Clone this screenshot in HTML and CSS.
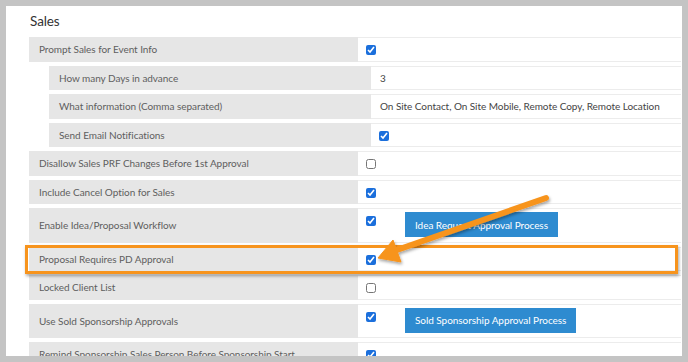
FILE: index.html
```html
<!DOCTYPE html>
<html lang="en">

<head>
  <meta charset="UTF-8">
  <meta name="viewport" content="width=device-width, initial-scale=1.0">
  <title>Sales Settings</title>
  <link rel="stylesheet" href="styles.css">
</head>

<body>
  <div class="page">
    <div class="panel">
      <h2 class="section-title">Sales</h2>
      <div class="settings">
        <div class="setting">
          <div class="setting-label">Prompt Sales for Event Info</div>
          <div class="setting-value"><input type="checkbox" checked></div>
        </div>
        <div class="setting sub">
          <div class="setting-label">How many Days in advance</div>
          <div class="setting-value"><span class="text">3</span></div>
        </div>
        <div class="setting sub">
          <div class="setting-label">What information (Comma separated)</div>
          <div class="setting-value"><span class="text">On Site Contact, On Site Mobile, Remote Copy, Remote Location</span></div>
        </div>
        <div class="setting sub">
          <div class="setting-label">Send Email Notifications</div>
          <div class="setting-value"><input type="checkbox" checked></div>
        </div>
        <div class="setting">
          <div class="setting-label">Disallow Sales PRF Changes Before 1st Approval</div>
          <div class="setting-value"><input type="checkbox"></div>
        </div>
        <div class="setting">
          <div class="setting-label">Include Cancel Option for Sales</div>
          <div class="setting-value"><input type="checkbox" checked></div>
        </div>
        <div class="setting">
          <div class="setting-label">Enable Idea/Proposal Workflow</div>
          <div class="setting-value">
            <input type="checkbox" checked>
            <button class="action-button">Idea Request Approval Process</button>
          </div>
        </div>
        <div class="setting highlighted">
          <div class="setting-label">Proposal Requires PD Approval</div>
          <div class="setting-value"><input type="checkbox" checked></div>
        </div>
        <div class="setting">
          <div class="setting-label">Locked Client List</div>
          <div class="setting-value"><input type="checkbox"></div>
        </div>
        <div class="setting">
          <div class="setting-label">Use Sold Sponsorship Approvals</div>
          <div class="setting-value">
            <input type="checkbox" checked>
            <button class="action-button">Sold Sponsorship Approval Process</button>
          </div>
        </div>
        <div class="setting">
          <div class="setting-label">Remind Sponsorship Sales Person Before Sponsorship Start</div>
          <div class="setting-value"><input type="checkbox" checked></div>
        </div>
      </div>
    </div>

    <!-- annotation arrow pointing at the highlighted checkbox -->
    <svg class="annotation-arrow" viewBox="0 0 688 362" width="688" height="362">
      <defs>
        <filter id="arrow-shadow" x="-10%" y="-30%" width="130%" height="160%">
          <feDropShadow dx="1" dy="2" stdDeviation="1.5" flood-color="#000" flood-opacity="0.35" />
        </filter>
      </defs>
      <g filter="url(#arrow-shadow)" fill="#f7941d" stroke="#f7941d">
        <line x1="546" y1="198" x2="394" y2="251" stroke-width="6" stroke-linecap="round" />
        <polygon points="378,258 393,240 401,262" stroke-width="1" stroke-linejoin="round" />
      </g>
    </svg>
  </div>
</body>

</html>
```

FILE: styles.css
```css
* {
  box-sizing: border-box;
}

body {
  margin: 0;
  background-color: #c4c4c4;
  font-family: Lato, "Open Sans", sans-serif;
}

.page {
  position: relative;
  width: 688px;
  height: 362px;
  padding: 6px;
}

.panel {
  height: 350px;
  overflow: hidden;
  background-color: #fff;
  padding: 0 1px 0 23px;
}

.section-title {
  margin: 0;
  height: 31px;
  padding: 7px 0 0 1px;
  font-size: 13.5px;
  font-weight: 400;
  letter-spacing: -0.1px;
  color: #333;
}

.setting {
  display: flex;
  min-height: 24.5px;
  margin-bottom: 4px;
  white-space: nowrap;
}

.setting.sub {
  margin-left: 20px;
}

.setting-label {
  flex: none;
  width: 329px;
  display: flex;
  align-items: center;
  padding: 0 10px;
  background-color: #e6e6e6;
  font-size: 10px;
  letter-spacing: -0.05px;
  color: #5e5e5e;
}

.setting.sub .setting-label {
  width: 322px;
}

.setting-value {
  flex: 1;
  display: flex;
  align-items: flex-start;
  padding: 0 8px;
  border-top: 1px solid #ececec;
  border-bottom: 1px solid #ececec;
  font-size: 10px;
  letter-spacing: -0.05px;
  color: #444;
}

.setting-value input {
  width: 10px;
  height: 10px;
  margin: 7px 0 0;
  accent-color: #1b6fdc;
}

.setting-value .text {
  line-height: 22.5px;
  margin-left: 1px;
}

.action-button {
  height: 25px;
  margin: 3px 0 4.5px 29px;
  padding: 0 10px;
  border: 0;
  background-color: #2e8bd0;
  color: #fff;
  font-family: Lato, "Open Sans", sans-serif;
  font-size: 10px;
  letter-spacing: -0.05px;
}

.setting.highlighted {
  position: relative;
}

.setting.highlighted::after {
  content: "";
  position: absolute;
  top: -2px;
  right: 3px;
  bottom: -3px;
  left: -4px;
  border: 3px solid #f7941d;
  box-shadow: 1px 2px 3px rgba(0, 0, 0, 0.35);
}

.annotation-arrow {
  position: absolute;
  top: 0;
  left: 0;
  pointer-events: none;
}
```
